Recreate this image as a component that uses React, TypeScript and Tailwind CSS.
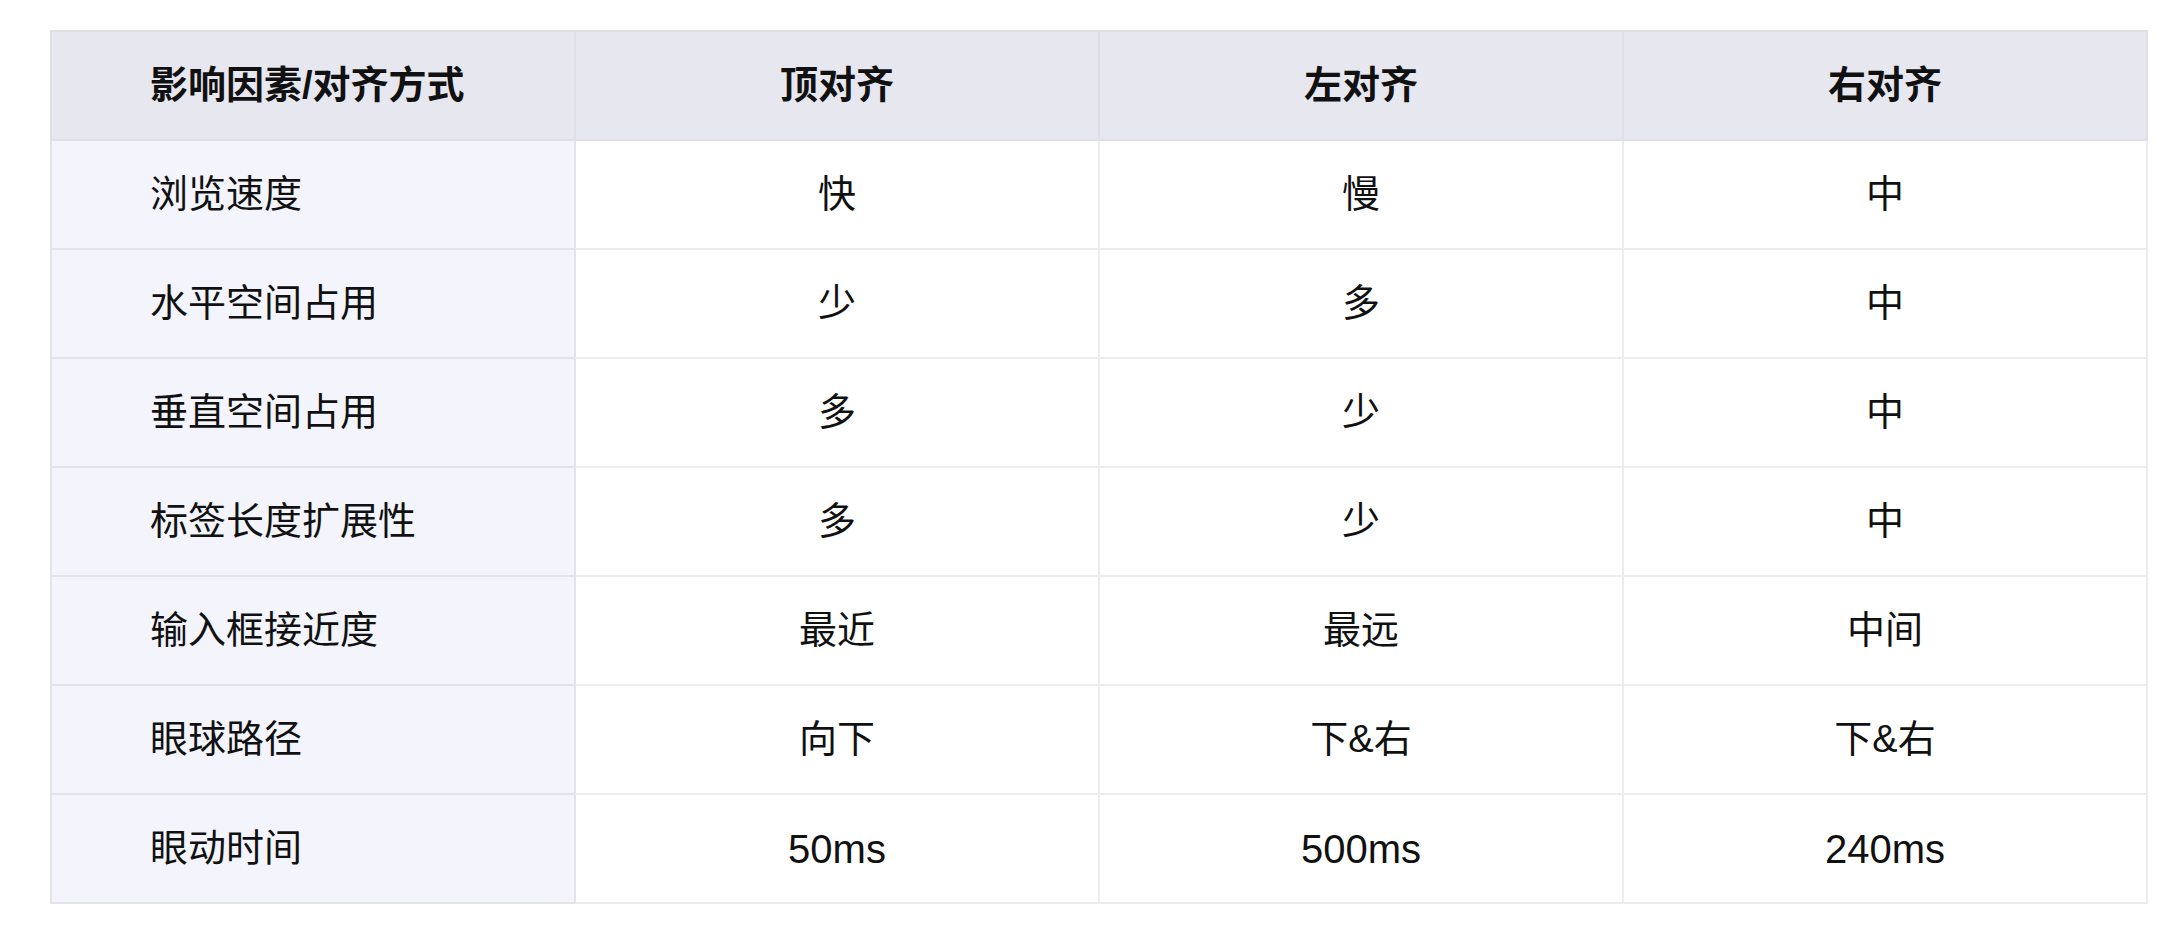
const headers = ["影响因素/对齐方式", "顶对齐", "左对齐", "右对齐"];

const rows: string[][] = [
  ["浏览速度", "快", "慢", "中"],
  ["水平空间占用", "少", "多", "中"],
  ["垂直空间占用", "多", "少", "中"],
  ["标签长度扩展性", "多", "少", "中"],
  ["输入框接近度", "最近", "最远", "中间"],
  ["眼球路径", "向下", "下&右", "下&右"],
  ["眼动时间", "50ms", "500ms", "240ms"],
];

export default function App() {
  return (
    <div
      className="w-[2182px] h-[934px] bg-white pt-[30px] pl-[50px]"
      style={{ fontFamily: '"Liberation Sans", "Noto Sans CJK SC", sans-serif' }}
    >
      <table className="w-[2098px] table-fixed border-collapse text-[38px] text-[#111]">
        <thead>
          <tr className="h-[109px] bg-[#e6e7ef]">
            {headers.map((h, i) => (
              <th
                key={h}
                className={
                  "border-2 border-[#dfdfe4] font-bold " +
                  (i === 0 ? "text-left pl-[98px]" : "text-center")
                }
              >
                {h}
              </th>
            ))}
          </tr>
        </thead>
        <tbody>
          {rows.map((r) => (
            <tr key={r[0]} className="h-[109px]">
              {r.map((c, i) =>
                i === 0 ? (
                  <td
                    key={i}
                    className="border-2 border-[#e4e4e8] bg-[#f3f4fc] text-left pl-[98px]"
                  >
                    {c}
                  </td>
                ) : (
                  <td
                    key={i}
                    className={
                      "border-2 border-[#ededed] text-center" +
                      (/ms$/.test(c) ? " text-[40px]" : "")
                    }
                  >
                    {c}
                  </td>
                )
              )}
            </tr>
          ))}
        </tbody>
      </table>
    </div>
  );
}
